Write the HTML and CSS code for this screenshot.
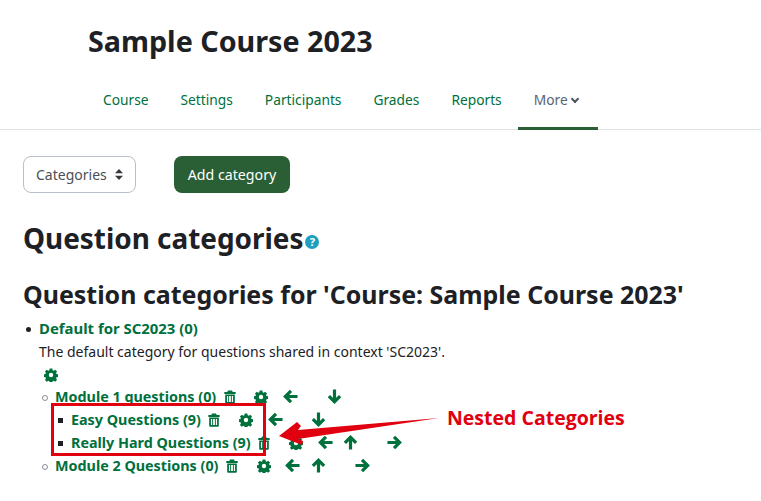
FILE: index.html
```html
<!DOCTYPE html>
<html lang="en">
<head>
    <meta charset="UTF-8">
    <meta name="viewport" content="width=device-width, initial-scale=1.0">
    <title>Question categories</title>
    <link rel="stylesheet" href="styles.css">
</head>
<body>
    <svg class="defs" width="0" height="0">
        <symbol id="i-gear" viewBox="0 0 16 16">
            <path fill-rule="evenodd" d="M6.500 .5h3l.4 2 1.200.5 1.700-1.100 2.100 2.100-1.100 1.700.5 1.200 2 .4v3l-2 .4-.5 1.200 1.100 1.700-2.100 2.100-1.700-1.100-1.200.5-.4 2h-3l-.4-2-1.200-.5-1.700 1.100-2.100-2.100 1.100-1.700-.5-1.200-2-.4v-3l2-.4.5-1.200-1.100-1.700 2.100-2.100 1.700 1.100 1.200-.5zM8 5.500a2.500 2.500 0 1 0 0 5 2.500 2.500 0 0 0 0-5z"/>
        </symbol>
        <symbol id="i-trash" viewBox="0 0 16 16">
            <path fill-rule="evenodd" d="M5.800 .5h4.400l1 1.800h3.300v2.200H1.500V2.300h3.300zM2.500 5.200h11v9c0 .8-.6 1.400-1.400 1.400H3.900c-.8 0-1.400-.6-1.400-1.400zm2 1.600v7h1.400v-7zm2.500 0v7h2v-7zm3.100 0v7h1.400v-7z"/>
        </symbol>
        <symbol id="i-left" viewBox="0 0 16 16">
            <path d="M8.500 2 2.500 8l6 6M3.500 8h12" class="stroke"/>
        </symbol>
        <symbol id="i-right" viewBox="0 0 16 16">
            <path d="M7.500 2l6 6-6 6M12.500 8H.5" class="stroke"/>
        </symbol>
        <symbol id="i-up" viewBox="0 0 16 16">
            <path d="M2 8.500l6-6 6 6M8 3.500v12" class="stroke"/>
        </symbol>
        <symbol id="i-down" viewBox="0 0 16 16">
            <path d="M2 7.500l6 6 6-6M8 12.500V.5" class="stroke"/>
        </symbol>
    </svg>

    <header class="page-header">
        <h1>Sample Course 2023</h1>
        <nav class="tabs">
            <a href="#">Course</a>
            <a href="#">Settings</a>
            <a href="#">Participants</a>
            <a href="#">Grades</a>
            <a href="#">Reports</a>
            <a href="#" class="active">More <span class="caret"></span></a>
        </nav>
    </header>

    <main class="content">
        <div class="toolbar">
            <div class="select">
                <span>Categories</span>
                <svg class="updown" width="8" height="11" viewBox="0 0 8 11"><path d="M4 0l4 4.300H0zM4 11L0 6.700h8z"/></svg>
            </div>
            <a href="#" class="btn">Add category</a>
        </div>

        <h2>Question categories<span class="help">?</span></h2>
        <h3>Question categories for 'Course: Sample Course 2023'</h3>

        <ul class="tree">
            <li><a href="#" class="top-link">Default for SC2023 (0)</a>
                <div>The default category for questions shared in context 'SC2023'.</div>
                <div class="solo"><svg class="icon"><use href="#i-gear"/></svg></div>
                <ul>
                    <li><a href="#">Module 1 questions (0)</a>
                        <svg class="icon trash"><use href="#i-trash"/></svg>
                        <svg class="icon gear"><use href="#i-gear"/></svg>
                        <svg class="icon arrow"><use href="#i-left"/></svg>
                        <svg class="icon arrow skip"><use href="#i-down"/></svg>
                        <ul>
                            <li><a href="#">Easy Questions (9)</a>
                                <svg class="icon trash"><use href="#i-trash"/></svg>
                                <svg class="icon gear"><use href="#i-gear"/></svg>
                                <svg class="icon arrow"><use href="#i-left"/></svg>
                                <svg class="icon arrow skip"><use href="#i-down"/></svg>
                            </li>
                            <li><a href="#">Really Hard Questions (9)</a>
                                <svg class="icon trash"><use href="#i-trash"/></svg>
                                <svg class="icon gear"><use href="#i-gear"/></svg>
                                <svg class="icon arrow"><use href="#i-left"/></svg>
                                <svg class="icon arrow close"><use href="#i-up"/></svg>
                                <svg class="icon arrow skip"><use href="#i-right"/></svg>
                            </li>
                        </ul>
                    </li>
                    <li><a href="#">Module 2 Questions (0)</a>
                        <svg class="icon trash"><use href="#i-trash"/></svg>
                        <svg class="icon gear"><use href="#i-gear"/></svg>
                        <svg class="icon arrow"><use href="#i-left"/></svg>
                        <svg class="icon arrow close"><use href="#i-up"/></svg>
                        <svg class="icon arrow skip"><use href="#i-right"/></svg>
                    </li>
                </ul>
            </li>
        </ul>
    </main>

    <!-- annotation drawn on top of the screenshot -->
    <div class="note-box"></div>
    <svg class="note-arrow" width="170" height="40" viewBox="0 0 170 40">
        <path d="M0 21 18 7l4 4-3 4L160 3 19 24l5 2-1 4z"/>
    </svg>
    <div class="note-text">Nested Categories</div>
</body>
</html>
```

FILE: styles.css
```css
* {
    box-sizing: border-box;
}

body {
    position: relative;
    margin: 0;
    height: 501px;
    overflow: hidden;
    background: #fff;
    color: #1d2125;
    font-family: "Noto Sans", sans-serif;
    font-size: 14px;
    line-height: 23px;
}

a {
    color: #00703c;
    text-decoration: none;
}

.defs {
    position: absolute;
}

.stroke {
    fill: none;
    stroke: currentColor;
    stroke-width: 3.4;
}

/* header */
.page-header {
    height: 130px;
    padding-top: 21px;
    border-bottom: 1px solid #dee2e6;
}

h1 {
    margin: 0 0 0 88px;
    font-size: 28.7px;
    font-weight: 700;
    line-height: 40px;
}

.tabs {
    display: flex;
    margin: 8px 0 0 87px;
}

.tabs a {
    height: 61px;
    padding: 18px 16px 0;
    font-size: 13.75px;
    line-height: 26px;
    white-space: nowrap;
}

.tabs .active {
    width: 80px;
    color: #5a6470;
    border-bottom: 3px solid #2a5f36;
}

.caret {
    display: inline-block;
    width: 6px;
    height: 6px;
    margin: 0 0 3px 1px;
    border-right: 2px solid #4a5562;
    border-bottom: 2px solid #4a5562;
    transform: rotate(45deg);
}

/* content */
.content {
    padding: 26px 23px 0;
}

.toolbar {
    display: flex;
    gap: 38px;
}

.select {
    display: flex;
    align-items: center;
    justify-content: space-between;
    width: 113px;
    height: 37px;
    padding: 0 12px;
    border: 1px solid #b8bfc7;
    border-radius: 8px;
    color: #495057;
}

.updown {
    fill: #343a40;
}

.btn {
    display: block;
    width: 116px;
    height: 37px;
    border-radius: 8px;
    background: #2a5f36;
    color: #fff;
    font-size: 14.2px;
    line-height: 37px;
    text-align: center;
}

h2 {
    margin: 25px 0 0;
    font-size: 27.9px;
    font-weight: 700;
    line-height: 40px;
}

.help {
    display: inline-block;
    width: 14px;
    height: 14px;
    margin-left: 2px;
    border-radius: 50%;
    background: #1f9fc0;
    color: #fff;
    font-size: 11px;
    line-height: 14px;
    text-align: center;
    vertical-align: 3px;
}

h3 {
    margin: 18px 0 0;
    font-size: 24.95px;
    font-weight: 700;
    line-height: 36px;
}

.tree {
    margin: 5px 0 0;
    padding-left: 16px;
    list-style: none;
}

.tree ul {
    margin: 0;
    padding-left: 16px;
    list-style: none;
}

/* small bullets, the default list markers come out too big */
.tree li::before {
    content: "";
    display: inline-block;
    box-sizing: border-box;
    width: 5px;
    height: 5px;
    margin: 0 8px 2px -13px;
    border-radius: 50%;
    background: #1d2125;
}

.tree > li > ul > li::before {
    width: 6px;
    height: 6px;
    margin: 0 7px 1px -13px;
    border: 1px solid #8a8f96;
    background: none;
}

.tree > li > ul > li > ul > li::before {
    width: 5px;
    height: 5px;
    margin: 0 8px 2px -13px;
    border: 0;
    border-radius: 0;
    background: #1d2125;
}

.tree a {
    font-size: 14.35px;
    font-weight: 700;
}

.tree .top-link {
    font-size: 14.9px;
}

.solo {
    height: 22px;
    padding-left: 5px;
}

.icon {
    width: 14px;
    height: 14px;
    color: #00703c;
    fill: #00703c;
    vertical-align: -2px;
}

.trash {
    margin-left: 3px;
}

.gear {
    margin-left: 14px;
}

.arrow {
    width: 15px;
    height: 15px;
    margin-left: 11px;
}

.arrow.close {
    margin-left: 7px;
}

.arrow.skip {
    margin-left: 25px;
}

/* annotation */
.note-box {
    position: absolute;
    left: 51px;
    top: 403px;
    width: 215px;
    height: 53px;
    border: 3px solid #e0000f;
}

.note-arrow {
    position: absolute;
    left: 279px;
    top: 415px;
    fill: #e0000f;
}

.note-text {
    position: absolute;
    left: 447px;
    top: 405px;
    color: #e0000f;
    font-family: "Open Sans", sans-serif;
    font-size: 19.5px;
    font-weight: 700;
    line-height: 26px;
}
```
